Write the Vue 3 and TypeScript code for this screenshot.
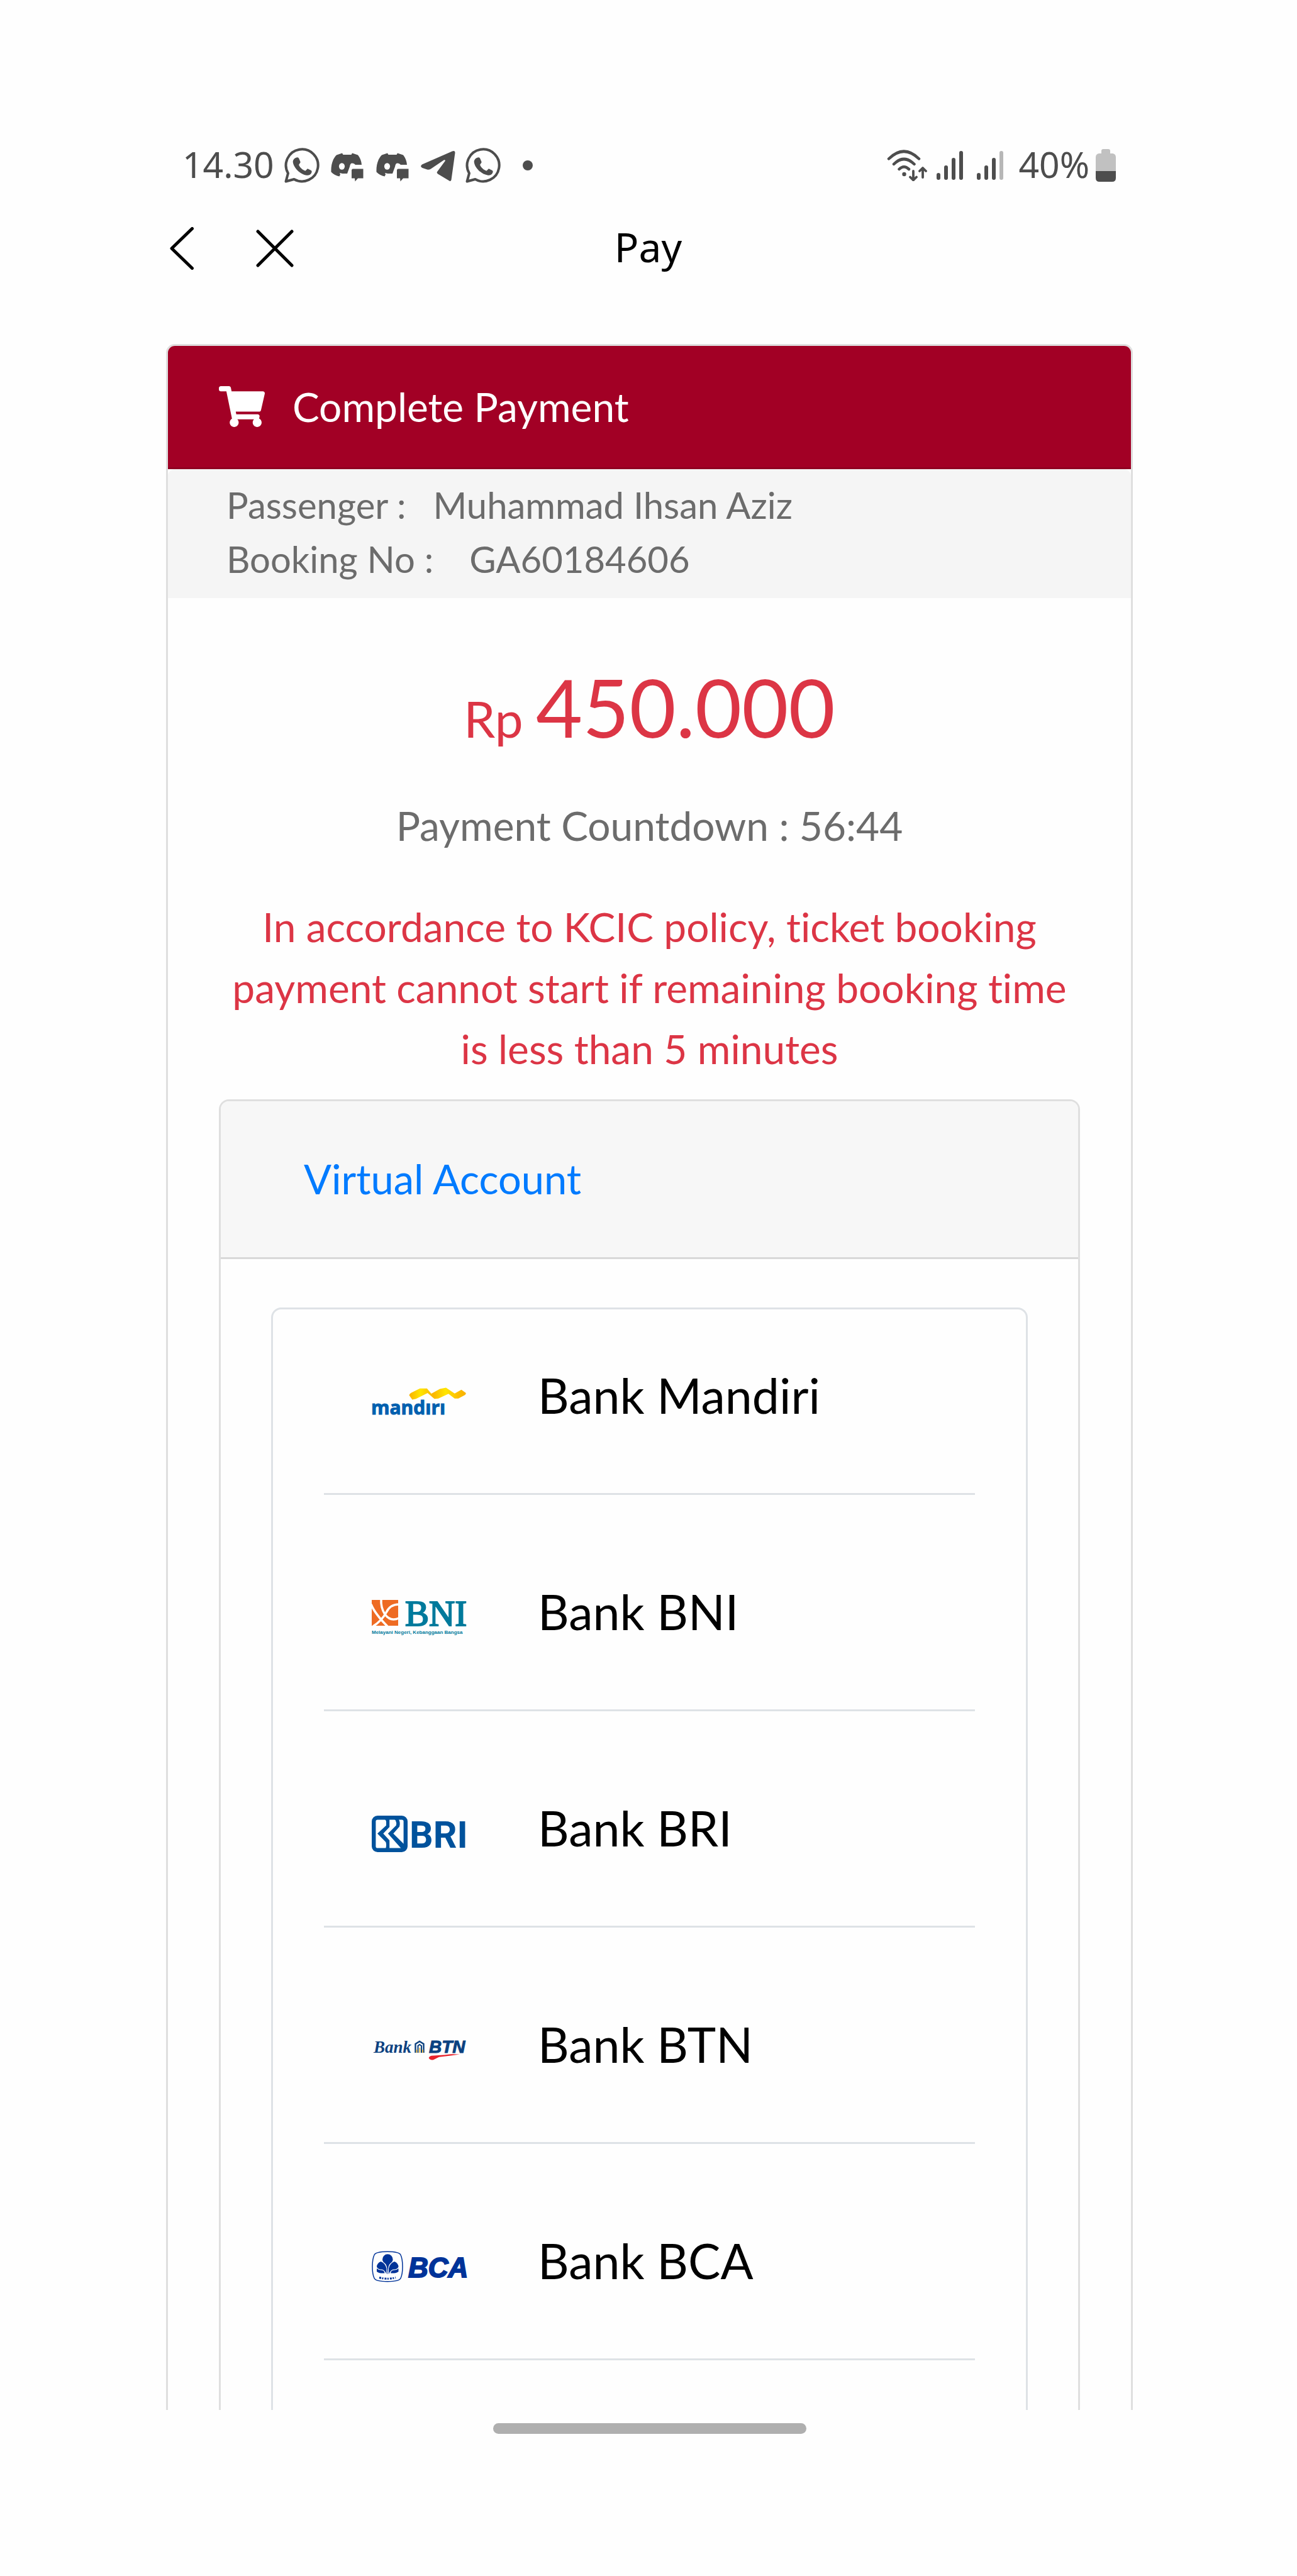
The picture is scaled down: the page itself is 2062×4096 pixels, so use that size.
<script setup lang="ts">
interface Bank {
  id: string
  name: string
}

const banks: Bank[] = [
  { id: 'mandiri', name: 'Bank Mandiri' },
  { id: 'bni', name: 'Bank BNI' },
  { id: 'bri', name: 'Bank BRI' },
  { id: 'btn', name: 'Bank BTN' },
  { id: 'bca', name: 'Bank BCA' },
]
</script>

<template>
  <div class="screen">
    <div class="status">
      <div class="status-side">
        <span class="status-text">14.30</span>
        <div class="notices">
          <template v-for="(kind, i) in ['wa', 'dc', 'dc', 'tg', 'wa']" :key="i">
            <svg v-if="kind === 'wa'" class="notice" viewBox="0 0 56 56">
              <path d="M2.500 53.500 6 40.500A25.500 25.500 0 1 1 15.500 50Z" fill="none" stroke="currentColor" stroke-width="4" stroke-linejoin="round" />
              <path d="M19.500 15.500c1.800-.8 3.200 0 4 2l2 4.800c.6 1.600-2.500 3.700-2.300 4.900 1.500 4 5.500 7.500 9.800 9.400 1.400.4 3.200-3.800 4.600-3.200l5 2.600c1.300.8 1.200 2 .6 3.700-1.100 2.800-4 4.300-7.200 4-10.300-1-21.500-12-22.300-21.300-.2-3 2.300-6 5.800-6.900Z" fill="currentColor" />
            </svg>
            <svg v-else-if="kind === 'dc'" class="notice" viewBox="0 0 56 56">
              <path d="M11 11.500 20 8.500 21.500 11H34.500L36 8.500 45 11.500C48.500 16 50.500 21 51 27H41C36 23 33 24 32 30L28 41H20.500L16 40 17 42.500 15.500 45.500C10.500 44.500 6 42 2.500 38.500 2 28 4.500 18 11 11.500Z" fill="currentColor" />
              <ellipse cx="19.500" cy="29.500" rx="4.600" ry="5.200" fill="#fff" />
              <path d="M36.500 33.500H53.500V48.500H45L40.500 53.500 40 48.500H35V35Z" fill="currentColor" />
            </svg>
            <svg v-else class="notice" viewBox="0 0 56 56">
              <path d="M3 26.500 51 5.500Q55.500 4 55.500 8L49.500 51Q48.500 54.500 45.500 52L28 41.500Q25.500 39.500 27.500 37.500L40 20.500Q39 18.500 37 20L17 33.500Q14 35.500 11 34.500L3.500 32Q-1 29.500 3 26.500Z" fill="currentColor" />
            </svg>
          </template>
        </div>
        <span class="more"></span>
      </div>
      <div class="status-side">
        <svg class="wifi" viewBox="0 0 64 50" fill="none" stroke="currentColor" stroke-width="4.500" stroke-linecap="round" stroke-linejoin="round">
          <path d="M3 14.500Q27 -9 51 14.500M11 23Q27 7 43.500 23M19.500 31Q27 23.500 35 31" />
          <circle cx="27.500" cy="39" r="3.200" fill="currentColor" stroke="none" />
          <path d="M42 34V48M37 43.500 42 48.500 47 43.500M57 44V30M52 34 57 29 62 34" stroke-width="3.800" />
        </svg>
        <svg v-for="n in 2" :key="n" class="signal" viewBox="0 0 42 46" fill="currentColor">
          <rect x="0" y="35" width="6" height="11" rx="3" />
          <rect x="12" y="23" width="6" height="23" rx="3" />
          <rect x="24" y="11" width="6" height="35" rx="3" />
          <rect x="36" y="0" width="6" height="46" rx="3" :opacity="n === 2 ? 0.4 : 1" />
        </svg>
        <span class="status-text">40%</span>
        <svg class="battery" viewBox="0 0 32 52">
          <path d="M9 7V3Q9 0 12 0H20Q23 0 23 3V7H27Q32 8 32 13V35H0V13Q0 8 5 7Z" fill="#c1c1c1" />
          <path d="M0 35H32V46Q32 52 26 52H6Q0 52 0 46Z" fill="currentColor" />
        </svg>
      </div>
    </div>

    <header class="nav">
      <div class="nav-buttons">
        <button type="button" class="nav-button" aria-label="Back">
          <svg class="back" viewBox="0 0 40 68"><path d="M36.500 2.500 4 34 36.500 65.500" /></svg>
        </button>
        <button type="button" class="nav-button" aria-label="Close">
          <svg class="close" viewBox="0 0 60 60"><path d="M3 3 57 57M57 3 3 57" /></svg>
        </button>
      </div>
      <h1 class="nav-title">Pay</h1>
    </header>

    <main class="card">
      <div class="card-header">
        <svg class="cart" viewBox="0 0 576 512" fill="currentColor">
          <path d="M528.120 301.319l47.273-208C578.806 78.301 567.391 64 551.990 64H159.208l-9.166-44.810C147.758 8.021 137.930 0 126.529 0H24C10.745 0 0 10.745 0 24v16c0 13.255 10.745 24 24 24h69.883l70.248 343.435C147.325 417.100 136 435.222 136 456c0 30.928 25.072 56 56 56s56-25.072 56-56c0-15.674-6.447-29.835-16.824-40h209.647C430.447 426.165 424 440.326 424 456c0 30.928 25.072 56 56 56s56-25.072 56-56c0-22.172-12.888-41.332-31.579-50.405l5.517-24.276c3.413-15.018-8.002-29.319-23.403-29.319H218.117l-6.545-32h293.145c11.206 0 20.920-7.754 23.403-18.681z" />
        </svg>
        <h2 class="card-title">Complete Payment</h2>
      </div>

      <dl class="info">
        <div class="info-row">
          <dt>Passenger :</dt>
          <dd>Muhammad Ihsan Aziz</dd>
        </div>
        <div class="info-row wide">
          <dt>Booking No :</dt>
          <dd>GA60184606</dd>
        </div>
      </dl>

      <div class="body">
        <p class="amount"><span class="currency">Rp&nbsp;</span>450.000</p>
        <p class="countdown">Payment Countdown : 56:44</p>
        <p class="policy">In accordance to KCIC policy, ticket booking payment cannot start if remaining booking time is less than 5 minutes</p>

        <section class="method">
          <div class="method-header">
            <a href="#virtual-account">Virtual Account</a>
          </div>
          <div id="virtual-account" class="method-body">
            <ul class="banks">
              <li v-for="bank in banks" :key="bank.id" class="bank">
                <button type="button" class="bank-button">
                  <svg class="logo" viewBox="0 0 150 60" aria-hidden="true">
                    <g v-if="bank.id === 'mandiri'">
                      <defs>
                        <linearGradient id="ribbon" x1="0" x2="1">
                          <stop offset="0" stop-color="#f9b000" />
                          <stop offset=".2" stop-color="#ffe600" />
                          <stop offset=".42" stop-color="#fbb400" />
                          <stop offset=".64" stop-color="#ffe600" />
                          <stop offset=".85" stop-color="#fdc000" />
                          <stop offset="1" stop-color="#f9b000" />
                        </linearGradient>
                      </defs>
                      <path d="M59.500 20.500Q60 18 63 16.500L76.600 9.800H87.800L94.700 18 108.300 10.400 118 8.500 131.800 17.800 142.500 11.700 149.800 17Q150 19 147.500 20.500L137.600 25.800H131.800L122 18.300 105.900 25.800 99.600 26.300 88.800 17 70.300 26.300 64.400 27.600Z" fill="url(#ribbon)" />
                      <text class="mandiri" x="-1" y="51">mandırı</text>
                    </g>
                    <g v-else-if="bank.id === 'bni'">
                      <rect x="0" y="2" width="42" height="41" fill="#ee6b23" />
                      <g fill="none" stroke="#fff" stroke-width="3.500">
                        <path d="M-1 9Q5 24 25 44M2 44Q16 35 23 22 29 9 43 9M15 1Q14 14 21 25 30 37 43 31" />
                      </g>
                      <text class="bni" x="53" y="43">BNI</text>
                      <text class="tagline" x="0" y="56">Melayani Negeri, Kebanggaan Bangsa</text>
                    </g>
                    <g v-else-if="bank.id === 'bri'" fill="#00529c">
                      <rect x="3.200" y="4.200" width="50.600" height="51.600" rx="6" fill="none" stroke="#00529c" stroke-width="6.400" />
                      <path d="M18.300 6Q23 7 23 11V16.400L9 29.600 22.300 42.900Q24 47 22 54H28.200V40.300L18.300 29.600 28.200 19V6Z" />
                      <path d="M33 6Q38 7 38.300 9.700 40 13 38.800 16.400L25.800 29.600 47.600 54H52V47L34.300 29.600 44 18.500Q46 12 42.500 6Z" />
                      <text class="bri" x="60" y="52">BRI</text>
                    </g>
                    <g v-else-if="bank.id === 'btn'">
                      <text class="btn-bank" x="3" y="34">Bank</text>
                      <path d="M69.500 34V20L76 16 82.500 20V34" fill="none" stroke="#0b4180" stroke-width="2.400" />
                      <path d="M73.500 34V23L76 21 79 23V34" fill="none" stroke="#0b4180" stroke-width="2" />
                      <path d="M76.300 26V34M71.500 29V34M81 29V34" stroke="#e9b949" stroke-width="1.800" />
                      <text class="btn" x="91" y="34">BTN</text>
                      <path d="M90.600 42Q92 39 95 38.800L115 37.400 126 36.300 139.800 36.600 126 38.400 107 40.800 98 45.300Q92 46 90.600 42Z" fill="#e8212b" />
                    </g>
                    <g v-else fill="#003399">
                      <path d="M25 6.300C37 6.300 44.500 8 46 11.500 50 20 50 40 46 48.500 44.500 52 37 53.700 25 53.700S5.500 52 4 48.500C0 40 0 20 4 11.500 5.500 8 13 6.300 25 6.300Z" fill="none" stroke="#003399" stroke-width="1.500" />
                      <path d="M25.300 10.300A8.300 8.300 0 0 1 33.600 18.600Q33.500 22.500 29 25.500 26.500 28 26 34L25.600 42H25L24.600 34Q24 28 21.600 25.500 17 22.500 17 18.600A8.300 8.300 0 0 1 25.300 10.300Z" />
                      <path d="M23.500 42V33Q22 25 14.500 22 8.500 24 8 30.500 10 34.500 15 34.500 20 34 23.500 42ZM27 42V33Q28.500 25 36 22 42 24 42.500 30.500 40.500 34.500 35.500 34.500 30.500 34 27 42Z" />
                      <path d="M8 33Q11 36 16 35.800 20 36.500 20.500 40.500 11 41 8 38ZM42.500 33Q39.500 36 34.500 35.800 30.500 36.500 30 40.500 39.500 41 42.500 38Z" />
                      <path d="M12 47.500Q25 51 38 47.500" fill="none" stroke="#003399" stroke-width="3" stroke-dasharray="3 1.500 2 2" />
                      <text class="bca" x="58" y="47">BCA</text>
                    </g>
                  </svg>
                  <span class="bank-name">{{ bank.name }}</span>
                </button>
              </li>
            </ul>
          </div>
        </section>
      </div>
    </main>

    <div class="home-bar"></div>
  </div>
</template>

<style>
body {
  margin: 0;
  background: #fefefe;
}
</style>

<style scoped>
.screen {
  box-sizing: border-box;
  padding: 230px 261px 225px 264px;
  font-family: Lato, sans-serif;
  font-size: 64px;
  line-height: 97px;
  font-variant-ligatures: none;
  color: #6c6c6c;
  background: #fefefe;
}
h1, h2, p, dl, dd, ul {
  margin: 0;
  padding: 0;
  font-weight: 400;
}
svg {
  display: block;
  flex: none;
}
button {
  border: 0;
  padding: 0;
  background: none;
  font: inherit;
  color: #000;
  text-align: left;
  cursor: pointer;
}
.status {
  display: flex;
  justify-content: space-between;
  height: 66px;
  padding: 0 27px 0 24px;
  color: #4d4d4d;
}
.status-side {
  display: flex;
  align-items: center;
}
.status-text {
  padding: 0 2px 4px;
  font-family: "Noto Sans", sans-serif;
  font-size: 57px;
  line-height: 62px;
}
.notices {
  display: flex;
  gap: 16px;
  margin-left: 14px;
}
.notice {
  width: 56px;
  height: 56px;
}
.more {
  width: 16px;
  height: 16px;
  margin-left: 35px;
  border-radius: 50%;
  background: #4d4d4d;
}
.wifi {
  width: 64px;
  height: 50px;
  margin-right: 15px;
}
.signal {
  width: 42px;
  height: 46px;
  margin-right: 22px;
}
.battery {
  width: 32px;
  height: 52px;
  margin-left: 8px;
}
.nav {
  display: grid;
  grid-template-columns: 1fr auto 1fr;
  align-items: center;
  height: 80px;
  margin-top: 59px;
}
.nav-buttons {
  display: flex;
  align-items: center;
  gap: 98px;
  padding-left: 5px;
}
.nav-button path {
  fill: none;
  stroke: #000;
  stroke-width: 5;
  stroke-linecap: round;
  stroke-linejoin: round;
}
.back {
  width: 40px;
  height: 68px;
}
.close {
  width: 60px;
  height: 60px;
}
.nav-title {
  padding: 0 4px 4px 0;
  font-family: "Noto Sans", sans-serif;
  font-size: 64px;
  line-height: 76px;
  color: #000;
}
.card {
  margin-top: 112px;
  border: 3px solid #dfdfdf;
  border-bottom: 0;
  border-radius: 14px 14px 0 0;
}
.card-header {
  display: flex;
  align-items: center;
  gap: 44px;
  padding: 48px 81px;
  border-bottom: 3px solid #8f0022;
  border-radius: 11px 11px 0 0;
  background: #a20025;
  color: #fff;
}
.cart {
  width: 73px;
  height: 65px;
}
.card-title {
  font-size: 64px;
  line-height: 97px;
}
.info {
  padding: 14px 93px 19px;
  border-radius: 11px 11px 0 0;
  background: #f5f5f5;
  font-size: 58px;
  line-height: 86px;
}
.info-row {
  display: flex;
  gap: 43px;
}
.info-row.wide {
  gap: 57px;
}
.body {
  padding: 95px 81px 0;
  text-align: center;
}
.amount {
  font-size: 128px;
  line-height: 155px;
  color: #dc3545;
}
.currency {
  font-size: 80px;
  line-height: 80px;
}
.countdown {
  margin-top: 63px;
}
.policy {
  margin-top: 64px;
  color: #dc3545;
}
.method {
  margin-top: 32px;
  border: 3px solid #dfdfdf;
  border-bottom: 0;
  border-radius: 16px 16px 0 0;
  text-align: left;
}
.method-header {
  padding: 75px 132px 76px;
  border-bottom: 3px solid #d8d8d8;
  border-radius: 13px 13px 0 0;
  background: #f7f7f7;
  font-size: 65px;
}
.method-header a {
  color: #007bff;
  text-decoration: none;
}
.method-body {
  padding: 77px 80px 0;
}
.banks {
  list-style: none;
  padding: 0 81px 79px;
  border: 3px solid #dee2e6;
  border-bottom: 0;
  border-radius: 16px 16px 0 0;
}
.bank {
  border-bottom: 3px solid #dee2e6;
}
.bank + .bank {
  padding-top: 49px;
}
.bank-button {
  display: flex;
  align-items: center;
  gap: 114px;
  width: 100%;
  height: 292px;
  padding-left: 76px;
}
.bank-name {
  padding-bottom: 20px;
  font-size: 77px;
  line-height: 92px;
}
.logo {
  width: 150px;
  height: 60px;
  overflow: visible;
}
.mandiri {
  font: 700 30px "Open Sans", sans-serif;
  fill: #0060af;
  stroke: #0060af;
  stroke-width: 1px;
}
.bni {
  font: 400 57px "Liberation Serif", serif;
  fill: #007a9c;
  stroke: #007a9c;
  stroke-width: 2px;
}
.tagline {
  font: 700 8px "Liberation Sans", sans-serif;
  fill: #007a9c;
}
.bri {
  font: 700 59px Roboto, sans-serif;
}
.btn-bank {
  font: italic 700 27px "Liberation Serif", serif;
  fill: #0b4180;
}
.btn {
  font: italic 700 28px "Liberation Sans", sans-serif;
  fill: #0b4180;
  stroke: #0b4180;
  stroke-width: 1px;
}
.bca {
  font: italic 700 44px "Liberation Sans", sans-serif;
  stroke: #003399;
  stroke-width: 2px;
}
.home-bar {
  width: 498px;
  height: 17px;
  margin: 21px auto 0;
  border-radius: 9px;
  background: #afafaf;
}
</style>
